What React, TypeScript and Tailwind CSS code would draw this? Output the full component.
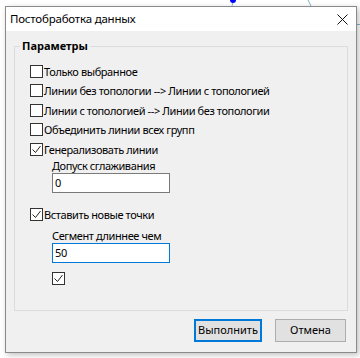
import React from "react";

const font = { fontFamily: '"Noto Sans", "Open Sans", sans-serif' };

function Check() {
  return (
    <svg width="11" height="11" viewBox="0 0 11 11" className="block">
      <polyline points="1.5,5.5 4.5,8.5 9.5,2" fill="none" stroke="#222" strokeWidth="1" />
    </svg>
  );
}

function Box({ checked }: { checked?: boolean }) {
  return (
    <div className="flex h-[13px] w-[13px] shrink-0 items-center justify-center border border-[#333] bg-white">
      {checked && <Check />}
    </div>
  );
}

function CheckRow({ label, checked, h = "h-[20px]" }: { label: string; checked?: boolean; h?: string }) {
  return (
    <div className={`flex items-center ${h}`}>
      <Box checked={checked} />
      <span className="ml-[1px] leading-none">{label}</span>
    </div>
  );
}

export default function App() {
  return (
    <div
      className="relative h-[358px] w-[360px] overflow-hidden bg-white pl-[5px] pt-[6px] text-[11px] text-black"
      style={font}
    >
      <svg className="absolute left-0 top-0" width="360" height="30">
        <line x1="308" y1="0" x2="311" y2="6" stroke="#7fb8c8" strokeWidth="1" />
        <line x1="233" y1="2" x2="232" y2="6" stroke="#7fb8c8" strokeWidth="1" />
        <circle cx="233" cy="0" r="3" fill="#0000ff" />
        <line x1="357" y1="24.5" x2="360" y2="24.5" stroke="#7fb8c8" strokeWidth="1" />
      </svg>

      <div className="relative flex h-[347px] w-[352px] flex-col border border-[#8a8a8a] bg-[#f0f0f0] shadow-[2px_2px_6px_rgba(0,0,0,0.25)]">
        <div className="flex h-[24px] items-center justify-between bg-white pl-[4px] pr-[8px]">
          <span className="text-[11.5px] tracking-[-0.2px]">Постобработка данных</span>
          <svg width="11" height="11" viewBox="0 0 11 11">
            <line x1="0.5" y1="0.5" x2="10.5" y2="10.5" stroke="#111" strokeWidth="1" />
            <line x1="10.5" y1="0.5" x2="0.5" y2="10.5" stroke="#111" strokeWidth="1" />
          </svg>
        </div>

        <div className="flex flex-1 flex-col px-[8px] pt-[15px]">
          <div className="relative h-[265px] border border-[#dcdcdc] pl-[15px] pt-[14px] tracking-[-0.4px]">
            <span className="absolute left-[5px] top-[-8px] bg-[#f0f0f0] px-[2px] font-bold leading-[14px] tracking-normal">
              Параметры
            </span>
            <CheckRow label="Только выбранное" />
            <CheckRow label="Линии без топологии --> Линии с топологией" h="h-[19px]" />
            <CheckRow label="Линии с топологией --> Линии без топологии" />
            <CheckRow label="Объединить линии всех групп" h="h-[19px]" />
            <CheckRow label="Генерализовать линии" checked />

            <div className="ml-[22px] flex flex-col">
              <span className="h-[14px] leading-[14px]">Допуск сглаживания</span>
              <div className="flex h-[20px] w-[118px] items-center border border-[#7a7a7a] bg-white pl-[2px]">
                0
              </div>
            </div>

            <div className="mt-[11px]">
              <CheckRow label="Вставить новые точки" checked />
            </div>

            <div className="ml-[22px] mt-[5px] flex flex-col">
              <span className="h-[14px] leading-[14px]">Сегмент длиннее чем</span>
              <div className="flex h-[20px] w-[118px] items-center border border-[#0078d7] bg-white pl-[2px]">
                50
              </div>
              <div className="mt-[9px]">
                <Box checked />
              </div>
            </div>
          </div>

          <div className="mt-[8px] flex justify-end gap-[13px] pr-[2px]">
            <button className="h-[23px] w-[68px] border-2 border-[#0078d7] bg-[#e1e1e1] text-[11px]">
              Выполнить
            </button>
            <button className="h-[23px] w-[71px] border border-[#adadad] bg-[#e1e1e1] text-[11px]">
              Отмена
            </button>
          </div>
        </div>
      </div>
    </div>
  );
}
